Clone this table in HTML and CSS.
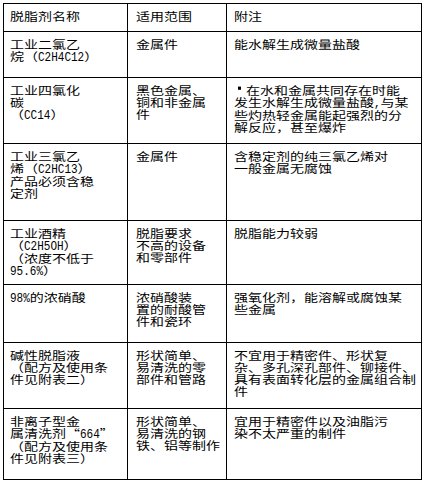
FILE: index.html
```html
<!DOCTYPE html>
<html lang="zh">
<head>
<meta charset="utf-8">
<link rel="stylesheet" href="styles.css">
</head>
<body>
<div class="grid">
  <div class="cell first"><div class="t">脱脂剂名称</div></div>
  <div class="cell mid"><div class="t">适用范围</div></div>
  <div class="cell last"><div class="t">附注</div></div>

  <div class="cell first"><div class="t">工业二氯乙<br>烷（<span class="en">C2H4C12</span>）</div></div>
  <div class="cell mid"><div class="t">金属件</div></div>
  <div class="cell last"><div class="t">能水解生成微量盐酸</div></div>

  <div class="cell first"><div class="t">工业四氯化<br>碳<br>（<span class="en">CC14</span>）</div></div>
  <div class="cell mid"><div class="t">黑色金属、<br>铜和非金属<br>件</div></div>
  <div class="cell last"><div class="t"><span class="dot"></span>在水和金属共同存在时能<br>发生水解生成微量盐酸<span class="en">,</span>与某<br>些灼热轻金属能起强烈的分<br>解反应，甚至爆炸</div></div>

  <div class="cell first"><div class="t">工业三氯乙<br>烯（<span class="en">C2HC13</span>）<br>产品必须含稳<br>定剂</div></div>
  <div class="cell mid"><div class="t">金属件</div></div>
  <div class="cell last"><div class="t">含稳定剂的纯三氯乙烯对<br>一般金属无腐蚀</div></div>

  <div class="cell first"><div class="t">工业酒精<br>（<span class="en">C2H5OH</span>）<br>（浓度不低于<br><span class="en">95.6%</span>）</div></div>
  <div class="cell mid"><div class="t">脱脂要求<br>不高的设备<br>和零部件</div></div>
  <div class="cell last"><div class="t">脱脂能力较弱</div></div>

  <div class="cell first"><div class="t"><span class="en">98%</span>的浓硝酸</div></div>
  <div class="cell mid"><div class="t">浓硝酸装<br>置的耐酸管<br>件和瓷环</div></div>
  <div class="cell last"><div class="t">强氧化剂，能溶解或腐蚀某<br>些金属</div></div>

  <div class="cell first"><div class="t">碱性脱脂液<br>（配方及使用条<br>件见附表二）</div></div>
  <div class="cell mid"><div class="t">形状简单、<br>易清洗的零<br>部件和管路</div></div>
  <div class="cell last"><div class="t">不宜用于精密件、形状复<br>杂、多孔深孔部件、铆接件、<br>具有表面转化层的金属组合制<br>件</div></div>

  <div class="cell first"><div class="t">非离子型金<br>属清洗剂“<span class="en">664</span>”<br>（配方及使用条<br>件见附表三）</div></div>
  <div class="cell mid"><div class="t">形状简单、<br>易清洗的钢<br>铁、铝等制作</div></div>
  <div class="cell last"><div class="t">宜用于精密件以及油脂污<br>染不太严重的制件</div></div>
</div>
</body>
</html>
```

FILE: styles.css
```css
html, body {
  margin: 0;
  padding: 0;
  background: #ffffff;
}
body {
  padding: 3px 0 0 3px;
  font-family: "Noto Sans CJK SC", "Liberation Sans", sans-serif;
  color: #000;
}
.grid {
  display: grid;
  grid-template-columns: 123px 98px 194px;
  grid-template-rows: 27px 45px 65px 76px 63px 57px 65px 70px;
  gap: 1px;
  padding: 1px;
  background: #000;
  width: 417px;
}
.cell {
  background: #fff;
  padding: 7px 0 0 6px;
  overflow: hidden;
  white-space: nowrap;
}
.cell.mid { padding-left: 8px; }
.cell.last { padding-left: 7px; }
.t {
  font-size: 14px;
  line-height: 15px;
  transform: scaleY(0.8);
  transform-origin: 0 0;
}
.en {
  display: inline-block;
  font-family: "Liberation Mono", monospace;
  font-size: 11px;
  line-height: 11px;
  transform: scaleY(1.55);
  transform-origin: 50% 85%;
}
.dot {
  display: inline-block;
  width: 3px;
  height: 4px;
  background: #000;
  margin: 0 5px 0 4px;
  vertical-align: 7px;
}
```
